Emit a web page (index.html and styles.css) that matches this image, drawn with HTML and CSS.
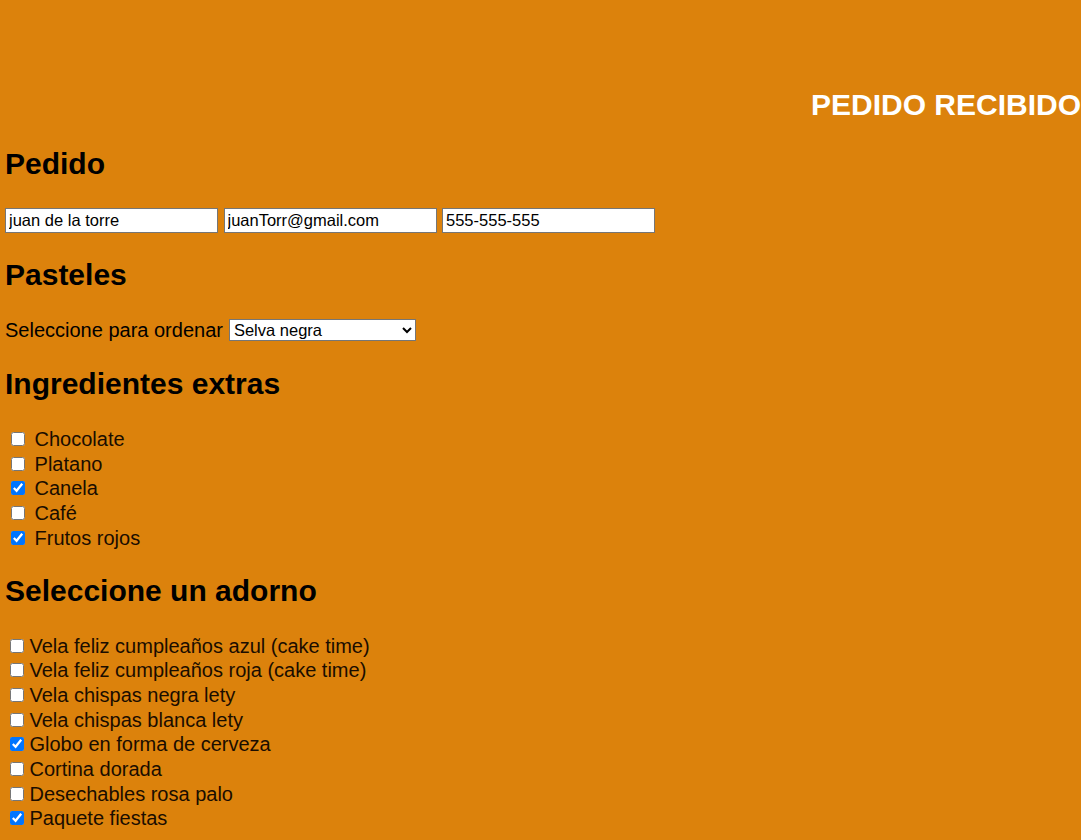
FILE: index.html
```html
<!DOCTYPE html>
<html lang="es">
<head>
<meta charset="utf-8">
<title>Pedido</title>
<link rel="stylesheet" href="styles.css">
</head>
<body>
<header class="top">
  <h1 class="status">PEDIDO RECIBIDO</h1>
</header>
<main class="content">
  <h2 class="title">Pedido</h2>
  <div class="fields">
    <input class="field" type="text" value="juan de la torre">
    <input class="field" type="email" value="juanTorr@gmail.com">
    <input class="field" type="tel" value="555-555-555">
  </div>

  <h2 class="title">Pasteles</h2>
  <div class="pick">
    <span class="pick-label">Seleccione para ordenar</span>
    <select class="picker">
      <option>Selva negra</option>
    </select>
  </div>

  <h2 class="title title-extras">Ingredientes extras</h2>
  <div class="checks checks-spaced">
    <label class="check"><input type="checkbox"> Chocolate</label>
    <label class="check"><input type="checkbox"> Platano</label>
    <label class="check"><input type="checkbox" checked> Canela</label>
    <label class="check"><input type="checkbox"> Café</label>
    <label class="check"><input type="checkbox" checked> Frutos rojos</label>
  </div>

  <h2 class="title title-adorno">Seleccione un adorno</h2>
  <div class="checks">
    <label class="check"><input type="checkbox">Vela feliz cumpleaños azul (cake time)</label>
    <label class="check"><input type="checkbox">Vela feliz cumpleaños roja (cake time)</label>
    <label class="check"><input type="checkbox">Vela chispas negra lety</label>
    <label class="check"><input type="checkbox">Vela chispas blanca lety</label>
    <label class="check"><input type="checkbox" checked>Globo en forma de cerveza</label>
    <label class="check"><input type="checkbox">Cortina dorada</label>
    <label class="check"><input type="checkbox">Desechables rosa palo</label>
    <label class="check"><input type="checkbox" checked>Paquete fiestas</label>
  </div>
</main>
</body>
</html>
```

FILE: styles.css
```css
html, body {
  margin: 0;
  padding: 0;
}

body {
  background: #dc820c;
  font-family: "Liberation Sans", Arial, sans-serif;
  font-size: 20px;
  color: #000;
  min-height: 840px;
}

.top {
  padding-top: 88px;
}

.status {
  margin: 0;
  font-size: 30px;
  line-height: 34px;
  font-weight: bold;
  color: #fff;
  text-align: right;
}

.content {
  padding: 0 5px;
}

.title {
  margin: 25px 0;
  font-size: 30px;
  line-height: 34px;
  font-weight: bold;
}

.title-extras {
  margin-top: 26px;
  margin-bottom: 26px;
}

.title-adorno {
  margin-top: 23px;
  margin-bottom: 26px;
}

.fields {
  display: flex;
  gap: 5.5px;
  margin-top: 27px;
}

.field {
  box-sizing: border-box;
  width: 213px;
  height: 25px;
  margin: 0;
  padding: 0 3px;
  border: 1px solid #767676;
  background: #fff;
  font-family: "Liberation Sans", Arial, sans-serif;
  font-size: 16.5px;
  color: #000;
}

.pick {
  display: flex;
  align-items: center;
  gap: 6px;
  height: 22px;
  margin-top: 27px;
}

.pick-label {
  line-height: 23px;
}

.picker {
  box-sizing: border-box;
  width: 187px;
  height: 22px;
  margin: 0;
  border: 1px solid #767676;
  border-radius: 0;
  background: #fff;
  font-family: "Liberation Sans", Arial, sans-serif;
  font-size: 16.5px;
  color: #000;
}

.checks {
  display: flex;
  flex-direction: column;
}

.check {
  display: block;
  line-height: 24.7px;
  color: #1a0d00;
}

.check input {
  width: 14px;
  height: 14px;
  margin: 3px 6px 1.5px 4.5px;
  vertical-align: baseline;
}

.checks-spaced .check input {
  margin-left: 5.5px;
  margin-right: 4.5px;
}
```
